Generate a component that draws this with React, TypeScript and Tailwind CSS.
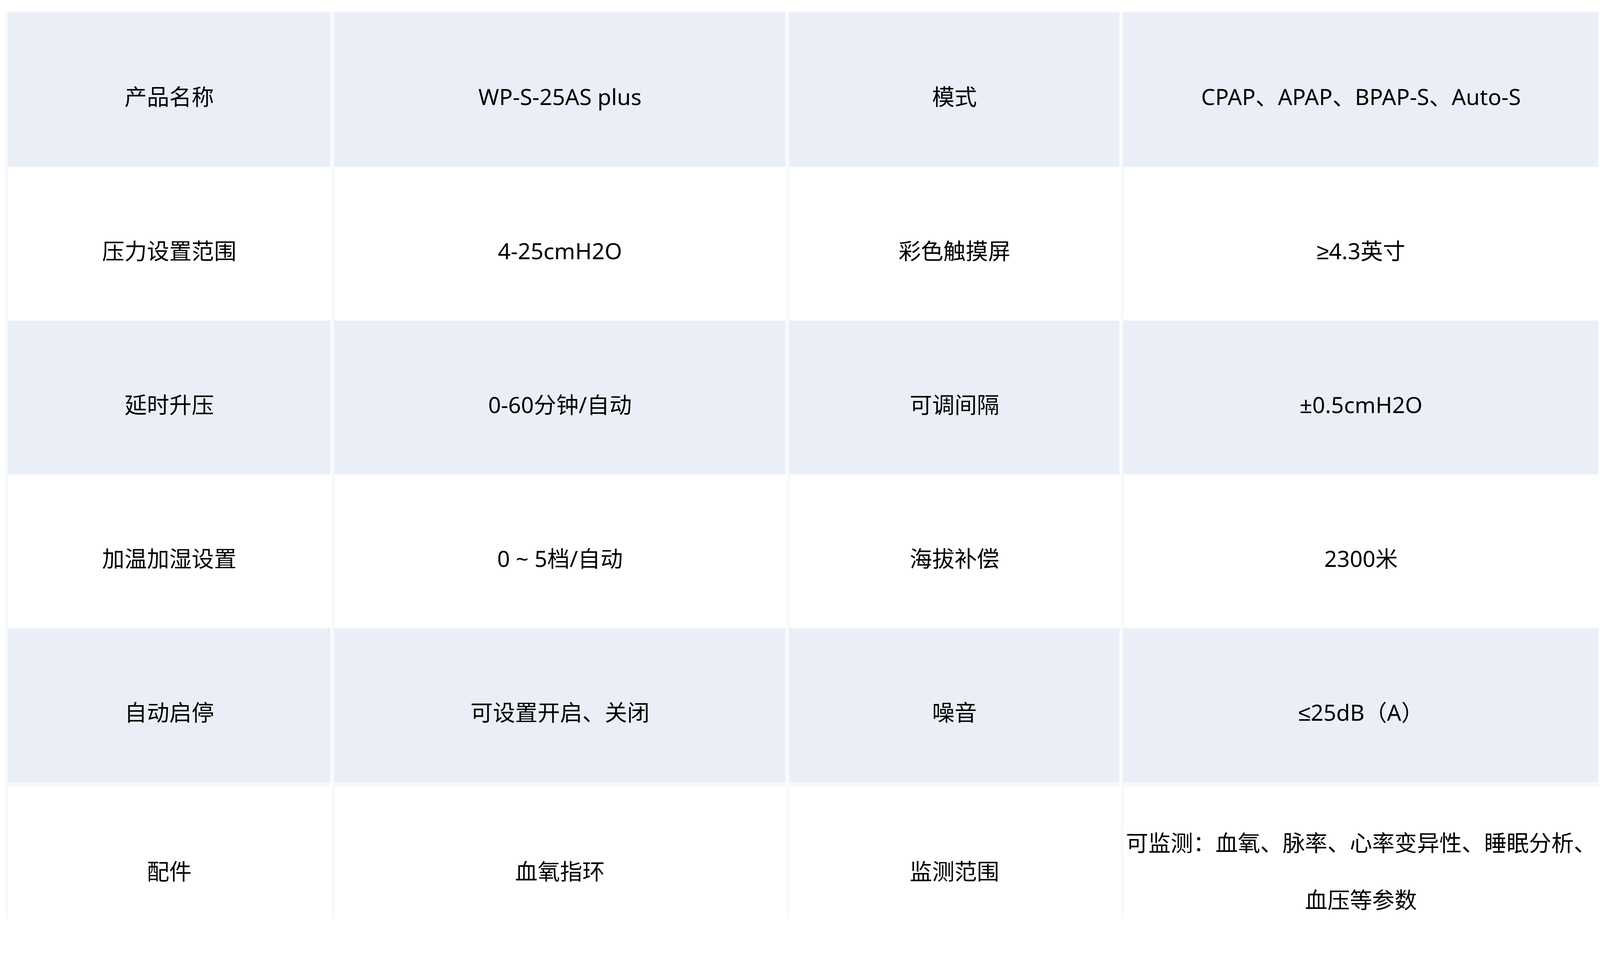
const rows: string[][] = [
  ['产品名称', 'WP-S-25AS plus', '模式', 'CPAP、APAP、BPAP-S、Auto-S'],
  ['压力设置范围', '4-25cmH2O', '彩色触摸屏', '≥4.3英寸'],
  ['延时升压', '0-60分钟/自动', '可调间隔', '±0.5cmH2O'],
  ['加温加湿设置', '0 ~ 5档/自动', '海拔补偿', '2300米'],
  ['自动启停', '可设置开启、关闭', '噪音', '≤25dB（A）'],
];

const lastRow = ['配件', '血氧指环', '监测范围', '可监测：血氧、脉率、心率变异性、睡眠分析、血压等参数'];

// column widths follow the table proportions, last one takes the rest
const widths = ['w-[20.48%]', 'w-[28.53%]', 'w-[20.96%]', 'flex-1'];

function Cell({ w, shaded, text }: { w: string; shaded: boolean; text: string }) {
  return (
    <div
      className={`${w} shrink-0 border-r-[4px] border-r-white border-l-[6px] border-l-[#f6f8fb] ${
        shaded ? 'bg-[#eaeff7]' : 'bg-white'
      } flex items-center justify-center pt-[36px] text-center`}
    >
      {text}
    </div>
  );
}

export default function App() {
  return (
    <div className="w-full h-[2446px] overflow-hidden bg-white text-black text-[1.4vw] leading-[1.5] font-['Noto_Sans','Liberation_Sans','Noto_Sans_CJK_SC',sans-serif]">
      <div className="pt-[31px] pl-[0.35%]">
        {rows.map((r, i) => (
          <div key={i} className={`flex ${i === 0 ? 'h-[396px]' : 'h-[394px]'}`}>
            {r.map((t, j) => (
              <Cell key={j} w={widths[j]} shaded={i % 2 === 0} text={t} />
            ))}
          </div>
        ))}
        <div className="flex h-[12px]">
          {widths.map((w, j) => (
            <div key={j} className={`${w} shrink-0 border-r-[4px] border-r-white bg-[#f6f8fb]`} />
          ))}
        </div>
        <div className="flex h-[339px]">
          {lastRow.map((t, j) => (
            <div
              key={j}
              className={`${widths[j]} shrink-0 border-r-[4px] border-r-white border-l-[6px] border-l-[#f6f8fb] bg-white`}
            >
              <div className="h-[431px] flex items-center justify-center text-center leading-[146px]">
                <span className="block w-full">{t}</span>
              </div>
            </div>
          ))}
        </div>
      </div>
    </div>
  );
}
